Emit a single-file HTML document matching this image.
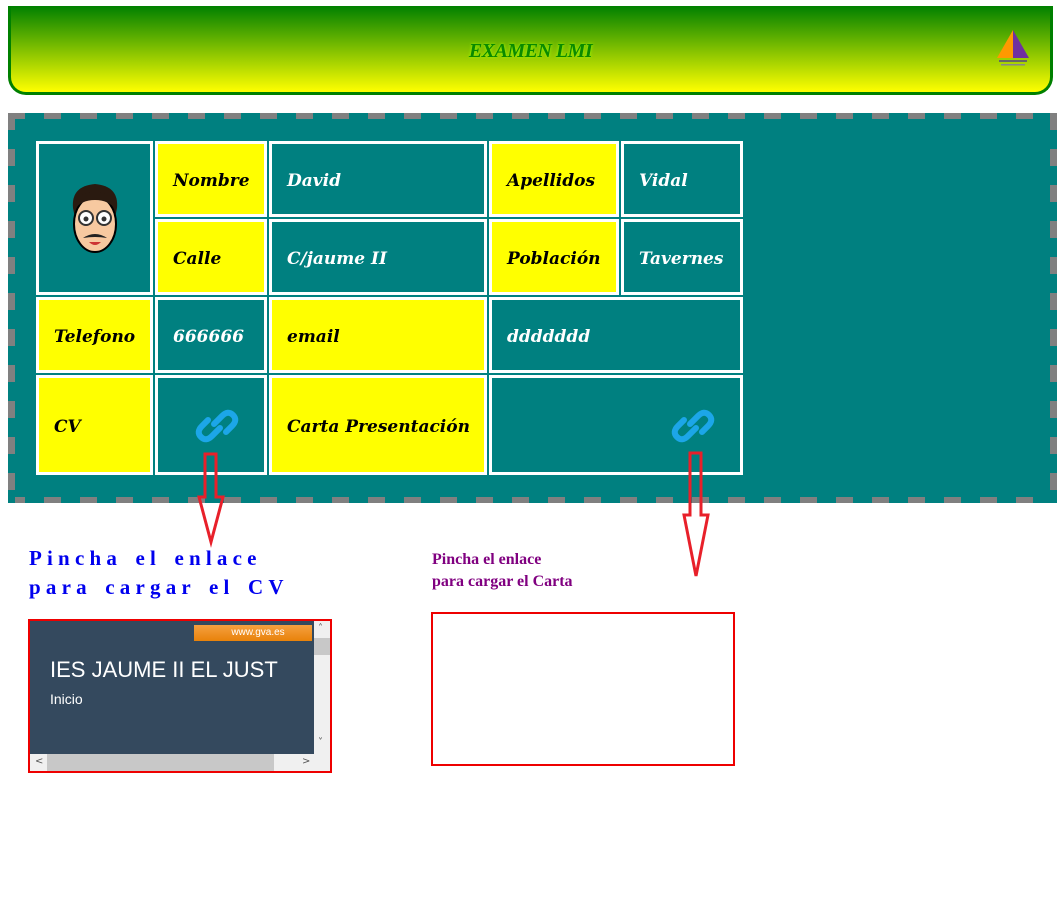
<!DOCTYPE html>
<html><head><meta charset="utf-8"><style>
*{margin:0;padding:0;box-sizing:border-box}
body{width:1063px;height:912px;background:#fff;position:relative;font-family:"Liberation Serif",serif;overflow:hidden}
.hdr{position:absolute;left:8px;top:6px;width:1045px;height:89px;border:3px solid #008000;border-top:none;border-radius:0 0 18px 18px;background:linear-gradient(#008000,#ffff00)}
.hdr h1{position:absolute;left:0;right:0;top:34px;text-align:center;font-size:20px;font-style:italic;font-weight:bold;color:#0a8a00;text-shadow:0 0 3px #9f0;letter-spacing:-0.5px}
.box{position:absolute;left:8px;top:113px;width:1049px;height:390px;background:#008080}
.bd{position:absolute}
.c{position:absolute;border:3px solid #fff;display:flex;align-items:center;padding-left:15px;padding-top:4px;font-family:"DejaVu Serif",serif;font-size:17px;font-weight:bold;font-style:italic}
.y{background:#ff0;color:#000}.t{background:#008080;color:#fff}
.ifr{position:absolute;border:2px solid #e00}
.sb{font:10px "DejaVu Sans",sans-serif;color:#555;position:absolute}
</style></head><body>
<div class="hdr"><h1>EXAMEN LMI</h1>
<svg style="position:absolute;left:984px;top:22px" width="36" height="40" viewBox="0 0 36 40"><polygon points="18,2 2,30 18,30" fill="#f90"/><polygon points="18,2 34,30 18,30" fill="#7030a0"/><rect x="4" y="32" width="28" height="2" fill="#666"/><rect x="6" y="36" width="24" height="1.5" fill="#888"/></svg>
</div>
<div class="box"></div>
<div class="bd" style="left:8px;top:113px;width:1049px;height:6px;background:repeating-linear-gradient(90deg,#808080 0 17px,#008080 17px 36px)"></div>
<div class="bd" style="left:8px;top:497px;width:1049px;height:6px;background:repeating-linear-gradient(90deg,#808080 0 17px,#008080 17px 36px)"></div>
<div class="bd" style="left:8px;top:113px;width:7px;height:390px;background:repeating-linear-gradient(180deg,#808080 0 17px,#008080 17px 36px)"></div>
<div class="bd" style="left:1050px;top:113px;width:7px;height:390px;background:repeating-linear-gradient(180deg,#808080 0 17px,#008080 17px 36px)"></div>
<div class="c t" style="left:36px;top:141px;width:117px;height:154px;justify-content:center;padding:0">
<svg width="60" height="80" viewBox="0 0 60 80"><path d="M8 30 Q6 8 30 6 Q54 8 52 30 L50 40 L10 40Z" fill="#2a1a10"/><ellipse cx="30" cy="46" rx="21" ry="28" fill="#f7c9a0" stroke="#000" stroke-width="2"/><path d="M9 32 Q10 14 30 14 Q50 14 51 32 Q44 22 30 22 Q16 22 9 32Z" fill="#2a1a10"/><circle cx="21" cy="40" r="7" fill="#fff" stroke="#333" stroke-width="2"/><circle cx="39" cy="40" r="7" fill="#fff" stroke="#333" stroke-width="2"/><circle cx="21" cy="41" r="2.5" fill="#333"/><circle cx="39" cy="41" r="2.5" fill="#333"/><path d="M18 60 Q30 52 42 60 Q30 58 18 60Z" fill="#222"/><path d="M24 64 Q30 70 36 64" fill="#c33"/></svg></div>
<div class="c y" style="left:155px;top:141px;width:112px;height:76px">Nombre</div>
<div class="c t" style="left:269px;top:141px;width:218px;height:76px">David</div>
<div class="c y" style="left:489px;top:141px;width:130px;height:76px">Apellidos</div>
<div class="c t" style="left:621px;top:141px;width:122px;height:76px">Vidal</div>
<div class="c y" style="left:155px;top:219px;width:112px;height:76px">Calle</div>
<div class="c t" style="left:269px;top:219px;width:218px;height:76px">C/jaume II</div>
<div class="c y" style="left:489px;top:219px;width:130px;height:76px">Población</div>
<div class="c t" style="left:621px;top:219px;width:122px;height:76px">Tavernes</div>
<div class="c y" style="left:36px;top:297px;width:117px;height:76px">Telefono</div>
<div class="c t" style="left:155px;top:297px;width:112px;height:76px">666666</div>
<div class="c y" style="left:269px;top:297px;width:218px;height:76px">email</div>
<div class="c t" style="left:489px;top:297px;width:254px;height:76px">ddddddd</div>
<div class="c y" style="left:36px;top:375px;width:117px;height:100px">CV</div>
<div class="c t" style="left:155px;top:375px;width:112px;height:100px"></div>
<div class="c y" style="left:269px;top:375px;width:218px;height:100px">Carta Presentación</div>
<div class="c t" style="left:489px;top:375px;width:254px;height:100px"></div>
<svg style="position:absolute;left:194px;top:406px" width="46" height="40" viewBox="0 0 46 40"><g fill="none" stroke="#1ca6e8" stroke-width="6" stroke-linecap="round"><path d="M20 18 L28 10 Q34 4 39 9 Q44 14 38 20 L32 26"/><path d="M26 22 L18 30 Q12 36 7 31 Q2 26 8 20 L14 14"/></g></svg>
<svg style="position:absolute;left:670px;top:406px" width="46" height="40" viewBox="0 0 46 40"><g fill="none" stroke="#1ca6e8" stroke-width="6" stroke-linecap="round"><path d="M20 18 L28 10 Q34 4 39 9 Q44 14 38 20 L32 26"/><path d="M26 22 L18 30 Q12 36 7 31 Q2 26 8 20 L14 14"/></g></svg>
<svg style="position:absolute;left:195px;top:452px" width="32" height="96"><path d="M10 2 H21 V45 H28 L16 90 L4 45 H10Z" fill="none" stroke="#e8202a" stroke-width="3"/></svg>
<svg style="position:absolute;left:680px;top:450px" width="32" height="130"><path d="M10 3 H21 V65 H28 L16 126 L4 65 H10Z" fill="none" stroke="#e8202a" stroke-width="3"/></svg>
<div style="position:absolute;left:29px;top:544px;color:#0000ee;font-weight:bold;font-size:21px;letter-spacing:5.2px;word-spacing:3px;line-height:29px">Pincha el enlace<br>para cargar el CV</div>
<div style="position:absolute;left:432px;top:549px;color:#800080;font-weight:bold;font-size:16px;line-height:22px">Pincha el enlace<br>para cargar el Carta</div>
<div class="ifr" style="left:28px;top:619px;width:304px;height:154px;background:#34495e">
<div style="position:absolute;left:164px;top:4px;width:118px;height:16px;background:linear-gradient(#f5a040,#e8820a);color:#fff;font:10px 'Liberation Sans',sans-serif;text-align:center;line-height:16px;padding-left:10px">www.gva.es</div>
<div style="position:absolute;left:20px;top:36px;color:#fff;font:22px 'Liberation Sans',sans-serif">IES JAUME II EL JUST</div>
<div style="position:absolute;left:20px;top:70px;color:#fff;font:14px 'Liberation Sans',sans-serif">Inicio</div>
<div style="position:absolute;left:284px;top:0;width:16px;height:150px;background:#f0f0f0"><div style="margin-top:17px;height:17px;background:#c8c8c8"></div><span class="sb" style="left:4px;top:2px">˄</span><span class="sb" style="left:4px;top:116px">˅</span></div>
<div style="position:absolute;left:0;top:133px;width:284px;height:17px;background:#f0f0f0"><div style="margin-left:17px;width:227px;height:17px;background:#c8c8c8"></div><span class="sb" style="left:5px;top:2px">&lt;</span><span class="sb" style="left:272px;top:2px">&gt;</span></div>
</div>
<div class="ifr" style="left:431px;top:612px;width:304px;height:154px"></div>
</body></html>
